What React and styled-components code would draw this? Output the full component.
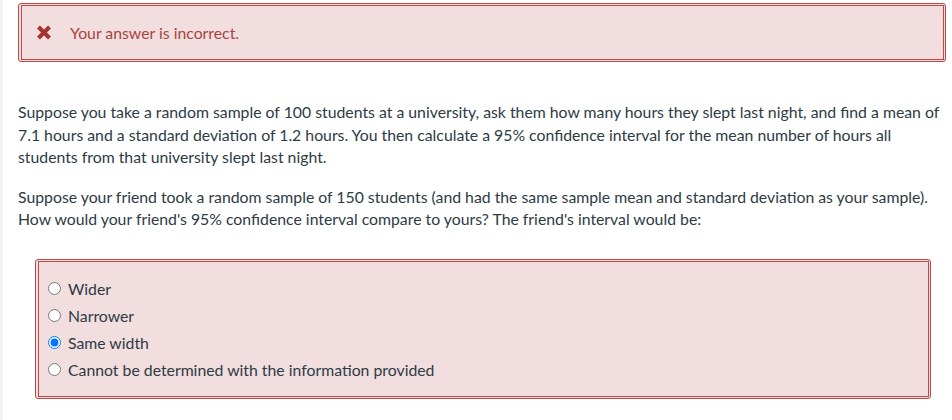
import React from "react";
import styled, { createGlobalStyle } from "styled-components";

const Global = createGlobalStyle`
  html, body { margin: 0; padding: 0; background: #ffffff; }
  body { font-family: Lato, "Noto Sans", sans-serif; color: #2d3b45; }
`;

const Page = styled.div`
  border-left: 3px solid #f3f3f3;
  padding: 3px 6px 20px 15px;
  min-height: 420px;
  box-sizing: border-box;
`;

const Frame = styled.div`
  border: 1px solid #bb4b48;
  border-radius: 3px;
  background: #f2dede;
  padding: 1px 1px 1px 2px;
  margin: ${(p) => p.$margin || "0"};
`;

const FrameInner = styled.div`
  border: 1px solid #bb4b48;
  background: #f2dede;
  box-sizing: border-box;
  padding: ${(p) => p.$padding || "0"};
`;

const AlertRow = styled.div`
  display: flex;
  align-items: center;
  gap: 18px;
  min-height: 53px;
`;

const AlertText = styled.span`
  font-size: 15.8px;
  color: #a94442;
`;

const Question = styled.div`
  margin-top: 39px;
  font-size: 15.8px;
  line-height: 22.5px;
`;

const Para = styled.p`
  margin: 0 0 17px 0;
`;

const Options = styled.div`
  display: flex;
  flex-direction: column;
`;

const Option = styled.label`
  display: flex;
  align-items: center;
  height: 27px;
  font-size: 15.8px;
  color: #2d3b45;
`;

const Radio = styled.input`
  margin: 0 7px 0 0;
  width: 13px;
  height: 13px;
`;

const XIcon = () => (
  <svg width="16" height="15" viewBox="0 0 16 15" aria-hidden="true">
    <path
      d="M2.5 2 L13.5 13 M13.5 2 L2.5 13"
      stroke="#a3332f"
      strokeWidth="4"
      strokeLinecap="butt"
    />
  </svg>
);

const options = [
  "Wider",
  "Narrower",
  "Same width",
  "Cannot be determined with the information provided",
];

export default function App() {
  return (
    <>
      <Global />
      <Page>
        <Frame>
          <FrameInner $padding="0 0 0 14px">
            <AlertRow>
              <XIcon />
              <AlertText>Your answer is incorrect.</AlertText>
            </AlertRow>
          </FrameInner>
        </Frame>
        <Question>
          <Para>
            Suppose you take a random sample of 100 students at a university, ask them how many
            hours they slept last night, and find a mean of 7.1 hours and a standard deviation of
            1.2 hours. You then calculate a 95% confidence interval for the mean number of hours
            all students from that university slept last night.
          </Para>
          <Para>
            Suppose your friend took a random sample of 150 students (and had the same sample mean
            and standard deviation as your sample). How would your friend's 95% confidence interval
            compare to yours? The friend's interval would be:
          </Para>
        </Question>
        <Frame $margin="28px 15px 0 17px">
          <FrameInner $padding="13px 0 13px 9px">
            <Options>
              {options.map((o, i) => (
                <Option key={o}>
                  <Radio type="radio" name="q" defaultChecked={i === 2} />
                  {o}
                </Option>
              ))}
            </Options>
          </FrameInner>
        </Frame>
      </Page>
    </>
  );
}
